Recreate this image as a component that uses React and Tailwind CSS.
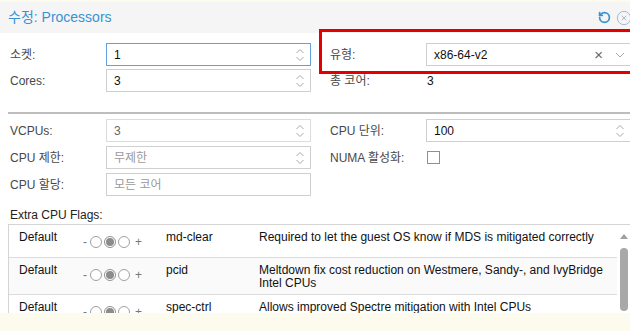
import { RotateCcw, CircleX } from "lucide-react";

const font = "font-['Liberation_Sans','Noto_Sans_CJK_KR',sans-serif]";

function Spin() {
  return (
    <svg width="10" height="16" viewBox="0 0 10 16" className="ml-auto shrink-0">
      <path d="M1.5 6 L5 2.5 L8.5 6" fill="none" stroke="#a8a8a8" strokeWidth="1" />
      <path d="M1.5 10 L5 13.5 L8.5 10" fill="none" stroke="#a8a8a8" strokeWidth="1" />
    </svg>
  );
}

function Field({ value, placeholder, spin = true, focus, disabled, wide, children }) {
  return (
    <div
      className={
        (wide ? "w-[212px] pr-[12px] " : "w-[205px] pr-[5px] ") +
        "h-[23px] shrink-0 bg-white flex items-center pl-[7px] text-[12px] border " +
        (focus ? "border-[#5fa2dd]" : disabled ? "border-[#dcdcdc]" : "border-[#cfcfcf]")
      }
    >
      {value != null ? (
        <span className={disabled ? "text-[#666]" : "text-[#111]"}>{value}</span>
      ) : (
        <span className="text-[#9a9a9a]">{placeholder}</span>
      )}
      {children}
      {spin && !children && <Spin />}
    </div>
  );
}

function Label({ children }) {
  return <div className="w-[96px] shrink-0 text-[12px] text-[#484848]">{children}</div>;
}

function Row({ children }) {
  return <div className="flex items-center h-[23px]">{children}</div>;
}

function Gap() {
  return <div className="w-[19px] shrink-0" />;
}

function Tri() {
  return (
    <div className="h-[22px] flex items-center text-[12px] text-[#777]">
      <span className="mr-[3px]">-</span>
      <span className="w-[12px] h-[12px] rounded-full border border-[#a0a0a0] bg-white" />
      <span className="ml-[2px] w-[12px] h-[12px] rounded-full border border-[#909090] bg-white flex items-center justify-center">
        <span className="w-[8px] h-[8px] rounded-full bg-[#8c8c8c]" />
      </span>
      <span className="ml-[2px] w-[12px] h-[12px] rounded-full border border-[#a0a0a0] bg-white" />
      <span className="ml-[5px]">+</span>
    </div>
  );
}

const flags = [
  ["md-clear", "Required to let the guest OS know if MDS is mitigated correctly"],
  ["pcid", "Meltdown fix cost reduction on Westmere, Sandy-, and IvyBridge Intel CPUs"],
  ["spec-ctrl", "Allows improved Spectre mitigation with Intel CPUs"],
];

export default function App() {
  return (
    <div className={"relative w-[630px] h-[331px] overflow-hidden bg-white flex flex-col " + font}>
      <div className="h-[2px] bg-[#fdfbee] shrink-0" />
      <div className="h-[31px] shrink-0 bg-[#f5f5f5] flex items-center justify-between pl-[8px]">
        <span className="text-[14px] text-[#3892d4]">수정: Processors</span>
        <div className="flex items-center gap-[5px] -mr-[2px]">
          <RotateCcw size={13} strokeWidth={3.2} color="#3892d4" />
          <CircleX size={16} strokeWidth={1.4} color="#9fb4cc" />
        </div>
      </div>

      <div className="pl-[10px] pt-[10px] flex flex-col shrink-0">
        <div className="flex flex-col gap-[3px]">
          <Row>
            <Label>소켓:</Label>
            <Field value="1" focus />
            <Gap />
            <Label>유형:</Label>
            <Field value="x86-64-v2" wide>
              <span className="ml-auto text-[15px] leading-none text-[#666] mr-[12px]">×</span>
              <svg width="10" height="6" viewBox="0 0 10 6">
                <path d="M1 1 L5 5 L9 1" fill="none" stroke="#aaa" strokeWidth="1" />
              </svg>
            </Field>
          </Row>
          <Row>
            <Label>Cores:</Label>
            <Field value="3" />
            <Gap />
            <Label>총 코어:</Label>
            <div className="text-[12px] text-[#111] pl-[1px]">3</div>
          </Row>
        </div>

        <div className="mt-[20px] -ml-[2px] h-[2px] bg-[#bdbdbd]" />

        <div className="mt-[5px] flex flex-col gap-[4px]">
          <Row>
            <Label>VCPUs:</Label>
            <Field value="3" disabled />
            <Gap />
            <Label>CPU 단위:</Label>
            <Field value="100" wide />
          </Row>
          <Row>
            <Label>CPU 제한:</Label>
            <Field placeholder="무제한" />
            <Gap />
            <Label>NUMA 활성화:</Label>
            <div className="ml-[1px] w-[13px] h-[13px] border border-[#8f8f8f] bg-white" />
          </Row>
          <Row>
            <Label>CPU 할당:</Label>
            <Field placeholder="모든 코어" spin={false} />
          </Row>
        </div>

        <div className="mt-[12px] h-[14px] leading-[14px] text-[12px] text-[#222]">Extra CPU Flags:</div>
      </div>

      <div className="mt-[2px] ml-[8px] h-[89px] shrink-0 flex border-t border-l border-[#d4d4d4] overflow-hidden">
        <div className="w-[609px] flex flex-col">
          {flags.map(([name, desc], i) => (
            <div
              key={name}
              className={
                "flex border-b border-[#dcdcdc] text-[12px] leading-[13px] text-[#111] " +
                (i % 2 === 1 ? "bg-[#fafafa]" : "bg-white")
              }
            >
              <div className="w-[66px] shrink-0 pl-[10px] pt-[6px]">Default</div>
              <div className="w-[85px] shrink-0 pl-[8px] pt-[6px] pb-[4px]">
                <Tri />
              </div>
              <div className="w-[93px] shrink-0 pl-[6px] pt-[6px]">{name}</div>
              <div className="flex-1 pl-[6px] pr-[6px] pt-[6px] pb-[4px]">{desc}</div>
            </div>
          ))}
        </div>
        <div className="w-[13px] shrink-0 bg-white flex flex-col items-center pt-[9px]">
          <svg width="8" height="5" viewBox="0 0 8 5">
            <path d="M0 5 L4 0 L8 5 Z" fill="#a0a0a0" />
          </svg>
          <div className="mt-[9px] w-[8px] h-[63px] rounded-full bg-[#a8a8a8]" />
        </div>
      </div>

      <div className="flex-1 bg-[#fdfbee]" />

      <div className="absolute left-[319px] top-[29px] w-[320px] h-[45px] border-[3px] border-[#e20000]" />
    </div>
  );
}
